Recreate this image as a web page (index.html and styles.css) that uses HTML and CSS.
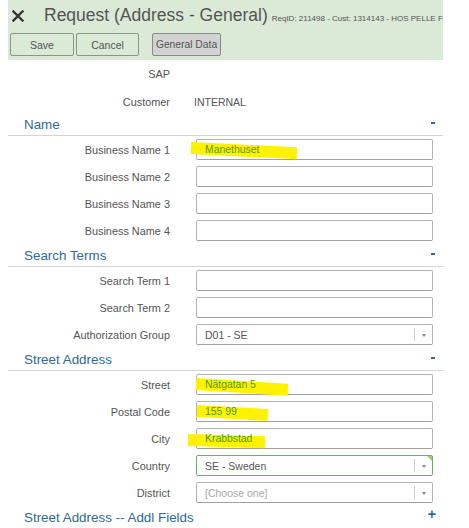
FILE: index.html
```html
<!DOCTYPE html>
<html>
<head>
<meta charset="utf-8">
<link rel="stylesheet" href="styles.css">
</head>
<body>
<div class="page">
  <div class="header">
    <div class="title-row">
      <svg class="close" width="12" height="12" viewBox="0 0 12 12"><path d="M1.5 1.5 L10.5 10.5 M10.5 1.5 L1.5 10.5" stroke="#333" stroke-width="2.3" stroke-linecap="square"/></svg>
      <span class="title">Request (Address - General)</span>
      <span class="subtitle">ReqID: 211498 - Cust: 1314143 - HOS PELLE F</span>
    </div>
    <div class="btn-row">
      <button class="btn btn-save">Save</button>
      <button class="btn btn-cancel">Cancel</button>
      <button class="btn btn-gray">General Data</button>
    </div>
  </div>

  <div class="row row-top"><div class="label">SAP</div><div class="value"></div></div>
  <div class="row row-top2"><div class="label">Customer</div><div class="value">INTERNAL</div></div>

  <div class="section"><span class="sec-title">Name</span><span class="toggle minus"></span></div>
  <div class="row"><div class="label">Business Name 1</div><div class="field"><span class="hl hl1"></span><span class="txt">Manethuset</span></div></div>
  <div class="row"><div class="label">Business Name 2</div><div class="field"></div></div>
  <div class="row"><div class="label">Business Name 3</div><div class="field"></div></div>
  <div class="row"><div class="label">Business Name 4</div><div class="field"></div></div>

  <div class="section"><span class="sec-title">Search Terms</span><span class="toggle minus"></span></div>
  <div class="row"><div class="label">Search Term 1</div><div class="field"></div></div>
  <div class="row"><div class="label">Search Term 2</div><div class="field"></div></div>
  <div class="row"><div class="label">Authorization Group</div><div class="field select"><span class="stxt">D01 - SE</span><span class="sep"></span><span class="arrow"></span></div></div>

  <div class="section"><span class="sec-title">Street Address</span><span class="toggle minus"></span></div>
  <div class="row"><div class="label">Street</div><div class="field"><span class="hl hl2"></span><span class="txt">Nätgatan 5</span></div></div>
  <div class="row"><div class="label">Postal Code</div><div class="field"><span class="hl hl3"></span><span class="txt">155 99</span></div></div>
  <div class="row"><div class="label">City</div><div class="field"><span class="hl hl4"></span><span class="txt">Krabbstad</span></div></div>
  <div class="row"><div class="label">Country</div><div class="field select valid"><span class="stxt">SE - Sweden</span><span class="sep"></span><span class="arrow"></span><span class="corner"></span></div></div>
  <div class="row"><div class="label">District</div><div class="field select"><span class="stxt placeholder">[Choose one]</span><span class="sep"></span><span class="arrow"></span></div></div>

  <div class="section"><span class="sec-title">Street Address -- Addl Fields</span><span class="toggle plus">+</span></div>
</div>
</body>
</html>
```

FILE: styles.css
```css
html, body {
  margin: 0;
  padding: 0;
  background: #fff;
  font-family: "Liberation Sans", Arial, sans-serif;
  overflow: hidden;
}
.page {
  width: 435px;
  margin-left: 8px;
  overflow: hidden;
}
.header {
  background: #dbe9d7;
  height: 60px;
  overflow: hidden;
}
.title-row {
  display: flex;
  align-items: baseline;
  height: 30px;
  white-space: nowrap;
  overflow: hidden;
}
.close {
  margin-left: 4px;
  margin-right: 20px;
  align-self: center;
  margin-top: 1px;
  flex: none;
}
.title {
  font-size: 17.5px;
  color: #555;
  line-height: 30px;
  flex: none;
}
.subtitle {
  font-size: 8px;
  color: #555;
  margin-left: 4px;
  flex: none;
}
.btn-row {
  display: flex;
  align-items: center;
  padding-left: 2px;
  padding-top: 3px;
}
.btn {
  height: 23px;
  padding: 0;
  font-family: "Liberation Sans", Arial, sans-serif;
  font-size: 10.5px;
  color: #555;
  background: #dbe9d7;
  border: 1px solid #8c958b;
  border-radius: 2px;
  margin-right: 2px;
}
.btn-save { width: 64px; }
.btn-cancel { width: 63px; margin-right: 13px; }
.btn-gray {
  width: 69px;
  background: #d2d2d2;
  border-color: #8a8a8a;
  font-size: 10.3px;
}
.row {
  display: flex;
  align-items: center;
  height: 27px;
  box-sizing: border-box;
}
.row-top { height: 28px; }
.row-top2 { height: 25px; padding-top: 3px; }
.label {
  width: 162px;
  text-align: right;
  font-size: 10.9px;
  color: #555;
  flex: none;
}
.value {
  margin-left: 24px;
  font-size: 10.5px;
  color: #555;
}
.section {
  height: 22px;
  border-bottom: 1px solid #d4d4d4;
  display: flex;
  align-items: center;
  justify-content: space-between;
  padding-left: 16px;
  padding-right: 8px;
}
.sec-title {
  font-size: 13.4px;
  color: #2f6b94;
  margin-top: 1px;
}
.toggle.minus {
  width: 4px;
  height: 2px;
  background: #2f6b94;
  margin-top: -3px;
}
.toggle.plus {
  font-size: 14px;
  font-weight: bold;
  color: #2f6b94;
  margin-top: -6px;
  margin-right: -1px;
}
.field {
  position: relative;
  margin-left: 26px;
  width: 235px;
  height: 19px;
  border: 1px solid #b3b3b3;
  border-bottom-color: #a0a0a0;
  border-radius: 2px;
  background: #fff;
  display: flex;
  align-items: center;
  flex: none;
}
.txt {
  position: relative;
  z-index: 2;
  margin-left: 8px;
  font-size: 10.4px;
  color: #4e9a0e;
}
.hl {
  position: absolute;
  z-index: 1;
  background: #fff200;
  height: 12px;
  transform-origin: left center;
}
.hl1 { left: -6px; top: 2px; width: 106px; transform: rotate(2.8deg); }
.hl2 { left: -1px; top: 3px; width: 92px; transform: rotate(3.6deg); }
.hl3 { left: 0px; top: 3px; width: 71px; transform: rotate(3.2deg); }
.hl4 { left: -9px; top: 5px; width: 77px; transform: rotate(1.6deg); }
.select .stxt {
  margin-left: 8px;
  font-size: 10.5px;
  color: #555;
  flex: 1;
}
.select .stxt.placeholder {
  color: #a8a8a8;
}
.sep {
  width: 1px;
  height: 13px;
  background: #cfcfcf;
  margin-right: 7px;
}
.arrow {
  width: 0;
  height: 0;
  border-left: 2.5px solid transparent;
  border-right: 2.5px solid transparent;
  border-top: 3px solid #8a8a8a;
  margin-right: 6px;
  margin-top: 2px;
}
.select.valid {
  border-color: #5cb85c;
}
.corner {
  position: absolute;
  right: 0;
  top: 0;
  width: 0;
  height: 0;
  border-top: 5px solid #a9c46c;
  border-left: 5px solid transparent;
}
```
